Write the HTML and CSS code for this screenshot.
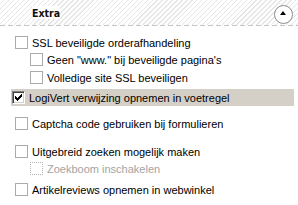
FILE: index.html
```html
<!DOCTYPE html>
<html>
<head>
<meta charset="utf-8">
<link rel="stylesheet" href="styles.css">
</head>
<body>
<div class="panel">
  <div class="head">
    <span class="title">Extra</span>
    <span class="toggle"><span class="tri"></span></span>
  </div>
  <div class="rule"></div>
  <ul class="opts">
    <li class="row g1"><span class="cb"></span><span class="lbl">SSL beveiligde orderafhandeling</span></li>
    <li class="row sub"><span class="cb"></span><span class="lbl">Geen "www." bij beveiligde pagina's</span></li>
    <li class="row sub g3"><span class="cb"></span><span class="lbl">Volledige site SSL beveiligen</span></li>
    <li class="row hl"><span class="cb checked"><svg width="7" height="7" viewBox="0 0 7 7"><path d="M0 2h1v1h1v1h1v-1h1v-1h1v-1h1v-1h1v3h-1v1h-1v1h-1v1h-1v1h-1v-1h-1v-1h-1v-1h-1z" fill="#000"/></svg></span><span class="lbl">LogiVert verwijzing opnemen in voetregel</span></li>
    <li class="row g5"><span class="cb"></span><span class="lbl">Captcha code gebruiken bij formulieren</span></li>
    <li class="row g6"><span class="cb"></span><span class="lbl">Uitgebreid zoeken mogelijk maken</span></li>
    <li class="row sub dis"><span class="cb"></span><span class="lbl">Zoekboom inschakelen</span></li>
    <li class="row g8"><span class="cb"></span><span class="lbl">Artikelreviews opnemen in webwinkel</span></li>
  </ul>
</div>
</body>
</html>
```
FILE: styles.css
```css
html, body {
  margin: 0;
  padding: 0;
  background: #fff;
}
body {
  width: 298px;
  height: 205px;
  overflow: hidden;
  font-family: "Liberation Sans", Arial, sans-serif;
  font-size: 11px;
  color: #000;
}
.head {
  height: 25px;
  display: flex;
  align-items: center;
  justify-content: space-between;
  padding: 0 5px 0 32px;
  background: repeating-linear-gradient(135deg, #fff 0 2.5px, #e6e6e6 2.5px 3.5px);
}
.title {
  font-family: "DejaVu Sans Condensed", "DejaVu Sans", sans-serif;
  font-size: 10.5px;
  font-weight: bold;
  color: #111;
  background: #fff;
  padding-top: 1px;
}
.toggle {
  box-sizing: border-box;
  width: 19px;
  height: 19px;
  border: 1px solid #8c8c8c;
  border-radius: 50%;
  background: #fff;
  display: flex;
  align-items: center;
  justify-content: center;
  margin-top: 3px;
}
.tri {
  width: 0;
  height: 0;
  border-left: 3.5px solid transparent;
  border-right: 3.5px solid transparent;
  border-bottom: 4px solid #000;
  margin: 0 1px 2px 0;
}
.rule {
  height: 1px;
  background: repeating-linear-gradient(90deg, #c4c4c4 0 5px, transparent 5px 8px);
}
.opts {
  list-style: none;
  margin: 8px 0 0;
  padding: 0;
}
.row {
  height: 17px;
  display: flex;
  align-items: center;
  padding-left: 15px;
  white-space: nowrap;
}
.row.sub { padding-left: 30px; }
.g3 { margin-top: 1px; }
.g5 { margin-top: 9px; }
.g6 { margin-top: 11px; }
.g8 { margin-top: 4px; }
.cb {
  box-sizing: border-box;
  width: 13px;
  height: 13px;
  border: 1px solid #ababab;
  background: #fff;
  flex: none;
  margin-right: 4px;
  display: flex;
  align-items: center;
  justify-content: center;
}
.lbl {
  padding-top: 1px;
}
.row.hl {
  margin: 3px 4px 0 11px;
  padding-left: 1px;
  background: #d4d0c8;
}
.cb.checked {
  border-color: #808080 #fff #fff #808080;
  box-shadow: inset 1px 1px #404040, inset -1px -1px #d4d0c8;
}
.dis .cb {
  border: 1px dotted #b4b4b4;
}
.dis .lbl {
  color: #a3a3a3;
}
```
